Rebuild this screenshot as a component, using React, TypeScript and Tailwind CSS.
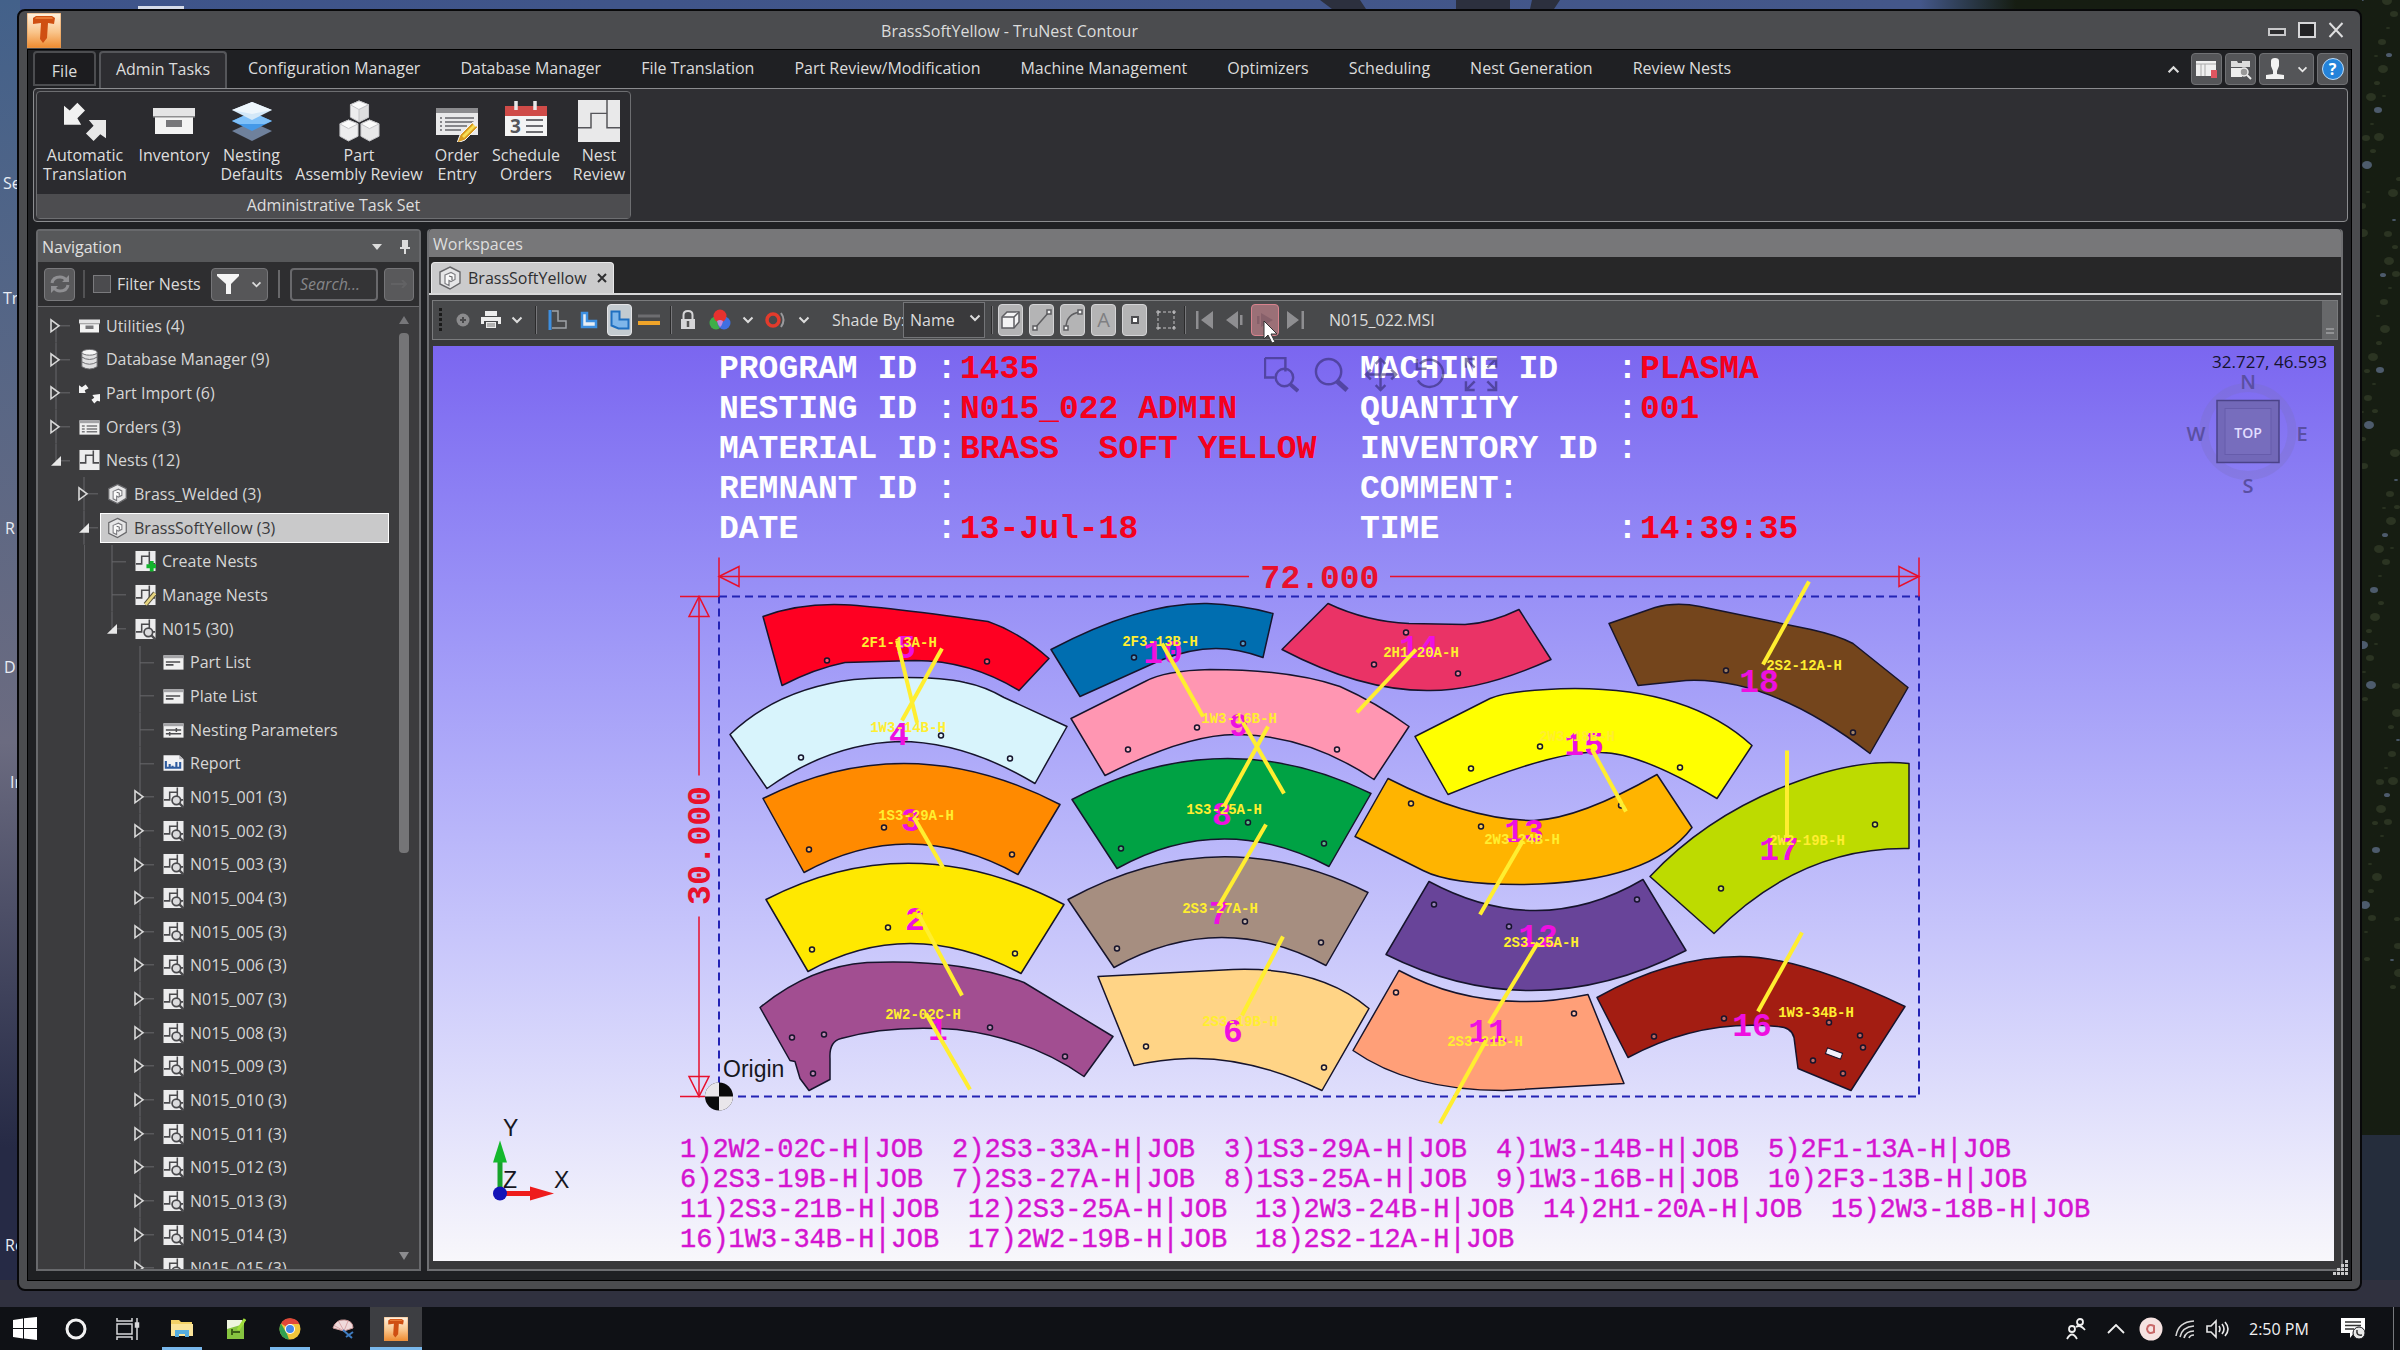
import React from "react";

const UI = "font-['Open_Sans','Noto_Sans',sans-serif]";

/* ---------- small shared glyphs ---------- */

const Chevron = ({ className = "w-3 h-2" }: { className?: string }) => (
  <svg viewBox="0 0 12 8" className={className} fill="none" stroke="currentColor" strokeWidth="2">
    <path d="M1.5 1.5 6 6l4.5-4.5" />
  </svg>
);

const LogoT = ({ className }: { className: string }) => (
  <svg viewBox="0 0 34 35" className={className} preserveAspectRatio="none">
    <defs>
      <linearGradient id="logoBg" x1="0" y1="0" x2="0" y2="1">
        <stop offset="0" stopColor="#fff3e2" />
        <stop offset="0.55" stopColor="#f9c48a" />
        <stop offset="1" stopColor="#ee8a2e" />
      </linearGradient>
    </defs>
    <rect width="34" height="35" fill="url(#logoBg)" stroke="#e59a55" />
    <path d="M6 5l3-2h16l3 2-1 6-6-1-1 15-4 5-3-4 1-16-8 1z" fill="#cf4f12" />
    <path d="M9 4h16l1 2H8z" fill="#e87a35" />
  </svg>
);

const BoxIcon = ({ className }: { className: string }) => (
  <svg viewBox="0 0 42 42" className={className}>
    <path d="M0 8h42v8H0z" fill="#e4e4e5" />
    <path d="M2 16h38v18H2z" fill="#f3f3f3" />
    <path d="M0 16h42v1.5H0z" fill="#8e8e90" />
    <path d="M13 20h16v7H13z" fill="#77777a" />
  </svg>
);

const NestIcon = ({ className, badge }: { className: string; badge?: "plus" | "edit" | "view" }) => (
  <svg viewBox="0 0 22 22" className={className}>
    <rect x="0.5" y="0.5" width="21" height="21" fill="#ececed" />
    <path d="M1 14h6V6h8v8h6M15 6V1" fill="none" stroke="#4a4a4d" strokeWidth="1.6" />
    {badge === "plus" && <path d="M17.500 11v11M12 16.500h11" stroke="#12b52c" strokeWidth="4" />}
    {badge === "edit" && (
      <>
        <path d="M11 21l10-12" stroke="#55503a" strokeWidth="5" />
        <path d="M11 21l10-12" stroke="#e6d480" strokeWidth="3" />
      </>
    )}
    {badge === "view" && (
      <>
        <circle cx="14" cy="14.500" r="4.500" fill="#dcdcde" stroke="#4a4a4d" strokeWidth="1.800" />
        <path d="M17.500 18l4 4" stroke="#4a4a4d" strokeWidth="2.500" />
      </>
    )}
  </svg>
);

const MaterialIcon = ({ className }: { className: string }) => (
  <svg viewBox="0 0 24 24" className={className}>
    <path d="M12 1l10 5v11l-10 6-10-5V6z" fill="#e6e6e7" stroke="#68686b" strokeWidth="1.400" />
    <path d="M7 9l6-2.500 4 2v5l-4 2-2-1v5l-4-2z" fill="#fafafa" stroke="#7c7c80" strokeWidth="1.200" />
    <path d="M11 10l3 1v3" fill="none" stroke="#68686b" strokeWidth="1.200" />
  </svg>
);

const TableIcon = ({ className, kind }: { className: string; kind: "orders" | "list" | "params" }) => (
  <svg viewBox="0 0 22 20" className={className}>
    <rect x="0.500" y="3" width="21" height="15" fill="#f0f0f0" />
    <rect x="0.500" y="3" width="21" height="3" fill="#a3a3a6" />
    {kind === "orders" && <path d="M3 9h3M8 9h11M3 12h3M8 12h11M3 15h3M8 15h11" stroke="#77777a" strokeWidth="1.500" />}
    {kind === "list" && <path d="M3 10h15M3 13h8" stroke="#4d4d50" strokeWidth="1.800" />}
    {kind === "params" && <path d="M3 10h16M3 14h16M14 8v4M7 12v4" stroke="#4d4d50" strokeWidth="1.600" />}
  </svg>
);

const DatabaseIcon = ({ className }: { className: string }) => (
  <svg viewBox="0 0 22 22" className={className} fill="#e0e0e1" stroke="#6c6c6f" strokeWidth="1">
    <path d="M3 14v5q8 5 16 0v-5z" />
    <path d="M3 9v5q8 5 16 0V9z" />
    <path d="M3 4v5q8 5 16 0V4z" />
    <ellipse cx="11" cy="4" rx="8" ry="3" fill="#f6f6f6" />
  </svg>
);

const ImportIcon = ({ className }: { className: string }) => (
  <svg viewBox="0 0 22 20" className={className} fill="#f4f4f4">
    <path d="M0 2l3 2 4-3 3 4-4 2 1 3H0z" />
    <path d="M22 11v8l-3-1-3 3-3-4 3-2-2-3z" />
  </svg>
);

const ReportIcon = ({ className }: { className: string }) => (
  <svg viewBox="0 0 22 20" className={className}>
    <path d="M0.500 2H17l4.500 4v12H.5z" fill="#f2f2f4" />
    <path d="M17 2v4h4.500" fill="#b5b5b9" />
    <path d="M3 8v7h15V9M7 15v-4M10 15v-2M14 15V9" fill="none" stroke="#2e5b9e" strokeWidth="2.200" />
  </svg>
);

/* ---------- ribbon ---------- */

const RIBBON_TABS = [
  "Configuration Manager",
  "Database Manager",
  "File Translation",
  "Part Review/Modification",
  "Machine Management",
  "Optimizers",
  "Scheduling",
  "Nest Generation",
  "Review Nests",
];

const big = "w-[42px] h-[42px]";

const TASKS: { lines: string[]; width: string; icon: React.ReactNode }[] = [
  {
    lines: ["Automatic", "Translation"],
    width: "w-[96px]",
    icon: (
      <svg viewBox="0 0 44 42" className={big} fill="#f1f1f1">
        <path d="M0 5l6 5 8-8 8 8-8 8 4 7H0z" />
        <path d="M44 20v19l-6-4-7 7-8-8 8-8-5-6z" fill="#e8e8e8" />
      </svg>
    ),
  },
  { lines: ["Inventory"], width: "w-[82px]", icon: <BoxIcon className={big} /> },
  {
    lines: ["Nesting", "Defaults"],
    width: "w-[73px]",
    icon: (
      <svg viewBox="0 0 42 42" className={big}>
        <path d="M21 22l20 9-20 10L1 31z" fill="#6f819c" />
        <path d="M21 12l20 9-20 10L1 21z" fill="#4599e8" />
        <path d="M21 12l20 9-7 3H8l-7-3z" fill="#7fc0f8" />
        <path d="M21 2l20 8-20 10L1 10z" fill="#d3e8f8" />
        <path d="M21 2l20 8-20 4L1 10z" fill="#edf6fc" />
      </svg>
    ),
  },
  {
    lines: ["Part", "Assembly Review"],
    width: "w-[142px]",
    icon: (
      <svg viewBox="0 0 44 42" className={big} stroke="#c2c2c5" strokeWidth="1" strokeLinejoin="round">
        <path d="M22 0l10 4v13l-10 5-9-5V4z" fill="#ededee" />
        <path d="M22 0l10 4-10 5-9-5z" fill="#fbfbfb" />
        <path d="M22 9l10-5v13l-10 5z" fill="#dededf" />
        <path d="M11 20l10 4v13l-10 5-9-5V24z" fill="#ededee" />
        <path d="M11 20l10 4-10 5-9-5z" fill="#fbfbfb" />
        <path d="M33 20l10 4v13l-10 5-9-5V24z" fill="#e8e8e9" />
        <path d="M33 20l10 4-10 5-9-5z" fill="#fbfbfb" />
      </svg>
    ),
  },
  {
    lines: ["Order", "Entry"],
    width: "w-[54px]",
    icon: (
      <svg viewBox="0 0 42 42" className={big}>
        <rect x="0" y="8" width="42" height="27" fill="#e9e9ea" />
        <rect x="0" y="8" width="42" height="5" fill="#8b8b8e" />
        <path d="M4 18h2M9 18h29M4 22h2M9 22h29M4 26h2M9 26h22M4 30h2M9 30h16" stroke="#66666b" strokeWidth="1.500" />
        <path d="M21 43l3-8 13-13 5 5-13 13z" fill="#d99a1e" stroke="#f5f5f5" />
        <path d="M26 36l12-12 2 2-12 12z" fill="#f8df55" />
        <path d="M36 23l3-3 4 4-3 3z" fill="#eee" />
      </svg>
    ),
  },
  {
    lines: ["Schedule", "Orders"],
    width: "w-[84px]",
    icon: (
      <svg viewBox="0 0 42 42" className={big}>
        <rect x="0" y="6" width="42" height="30" fill="#f4f4f4" />
        <rect x="0" y="6" width="42" height="10" fill="#cf4b48" />
        <path d="M11 1v9M30 1v9" stroke="#e9e9ea" strokeWidth="3.500" />
        <text x="5" y="33" fontSize="19" fontWeight="700" fill="#56565a" fontFamily="Open Sans">3</text>
        <path d="M21 20h17M21 26h17M21 32h17" stroke="#6d6d72" strokeWidth="2" />
      </svg>
    ),
  },
  {
    lines: ["Nest", "Review"],
    width: "w-[62px]",
    icon: (
      <svg viewBox="0 0 42 44" className={big} preserveAspectRatio="none">
        <rect width="42" height="44" fill="#e9e9ea" />
        <path d="M0 29h13V14h16v15h13M29 14V0" fill="none" stroke="#55555a" strokeWidth="1.500" />
      </svg>
    ),
  },
];

const QUICK =
  "flex h-8 items-center justify-center gap-3 rounded border border-[#707174] bg-[#545558] text-[#e8e8e8]";

function Ribbon() {
  return (
    <div className="pl-[5px] pr-[3px]">
      <div className="flex h-[38px] items-stretch text-base text-[#dcdcdc]">
        <button className="mb-0.5 mt-px w-[63px] rounded-t border-2 border-[#4c4d50] bg-[#1c1c1f] pt-1">File</button>
        <button className="ml-[3px] mt-px w-[128px] rounded-t border-2 border-b-0 border-[#55565a] bg-[#2d2d31] pb-1">
          Admin Tasks
        </button>
        <div className="ml-px flex pb-0.5">
          {RIBBON_TABS.map((t) => (
            <button key={t} className="whitespace-nowrap px-5">
              {t}
            </button>
          ))}
        </div>
        <div className="ml-auto flex items-center gap-[3px]">
          <button aria-label="Collapse ribbon" className="mr-1 px-1">
            <Chevron className="h-[9px] w-[13px] rotate-180" />
          </button>
          <button aria-label="Layout" className={`${QUICK} w-[31px]`}>
            <svg viewBox="0 0 22 20" className="h-5 w-[22px]">
              <rect x="0" y="2" width="20" height="15" fill="#f0f0f0" />
              <path d="M0 5h20M5 5v12M9 5v12" stroke="#aaa" />
              <rect x="15" y="11" width="6" height="8" fill="#e05560" />
            </svg>
          </button>
          <button aria-label="Find files" className={`${QUICK} w-[31px]`}>
            <svg viewBox="0 0 22 22" className="h-[22px] w-[22px]">
              <path d="M1 3h6l1 2h4v4H1zM12 3h8v6h-8z" fill="#ddd" />
              <path d="M1 10h11v9H1z" fill="#eee" />
              <circle cx="14" cy="14" r="4" fill="#999" stroke="#eee" strokeWidth="1.500" />
              <path d="M17 17l4 4" stroke="#eee" strokeWidth="2" />
            </svg>
          </button>
          <button aria-label="User" className={`${QUICK} w-[55px]`}>
            <svg viewBox="0 0 20 22" className="h-[22px] w-5" fill="#f2f2f2">
              <path d="M6 3q0-3 4-3t4 3v5l-2 5v3l7 1v4H1v-4l7-1v-3L6 8z" />
            </svg>
            <Chevron className="h-[7px] w-[11px]" />
          </button>
          <button aria-label="Help" className={`${QUICK} w-[31px]`}>
            <span className="flex h-[22px] w-[22px] items-center justify-center rounded-full border border-[#bcdcf8] bg-[#2483da] text-base font-bold text-white">
              ?
            </span>
          </button>
        </div>
      </div>

      <div className="flex h-[134px] rounded border border-[#8b8c8f] bg-[#2f2f33] p-0.5">
        <section className="flex flex-col rounded-sm border border-[#6d6e71] bg-[#2b2b2f]">
          <div className="flex flex-1 pt-[8px]">
            {TASKS.map((t) => (
              <button key={t.lines[0]} className={`${t.width} flex flex-col items-center whitespace-nowrap`}>
                {t.icon}
                <span className="mt-1 text-base leading-[19px] text-[#dedede]">
                  {t.lines.map((l) => (
                    <span key={l} className="block">
                      {l}
                    </span>
                  ))}
                </span>
              </button>
            ))}
          </div>
          <h2 className="h-6 bg-[#4d4d50] text-center text-base leading-[23px] text-[#dedede]">Administrative Task Set</h2>
        </section>
      </div>
    </div>
  );
}

/* ---------- navigation tree ---------- */

type TreeRow = {
  label: string;
  level: number;
  icon: React.ReactNode;
  state?: "open" | "closed";
  selected?: boolean;
  lines: boolean[];
  last?: boolean;
  first?: boolean;
};

const sm = "h-[22px] w-[21px] shrink-0";

const ROWS: TreeRow[] = [
  { label: "Utilities (4)", level: 0, state: "closed", icon: <BoxIcon className={sm} />, lines: [], first: true },
  { label: "Database Manager (9)", level: 0, state: "closed", icon: <DatabaseIcon className={sm} />, lines: [] },
  { label: "Part Import (6)", level: 0, state: "closed", icon: <ImportIcon className={sm} />, lines: [] },
  { label: "Orders (3)", level: 0, state: "closed", icon: <TableIcon className={sm} kind="orders" />, lines: [] },
  { label: "Nests (12)", level: 0, state: "open", icon: <NestIcon className={sm} />, lines: [], last: true },
  { label: "Brass_Welded (3)", level: 1, state: "closed", icon: <MaterialIcon className={sm} />, lines: [false] },
  { label: "BrassSoftYellow (3)", level: 1, state: "open", selected: true, icon: <MaterialIcon className={sm} />, lines: [false] },
  { label: "Create Nests", level: 2, icon: <NestIcon className={sm} badge="plus" />, lines: [false, true] },
  { label: "Manage Nests", level: 2, icon: <NestIcon className={sm} badge="edit" />, lines: [false, true] },
  { label: "N015 (30)", level: 2, state: "open", icon: <NestIcon className={sm} badge="view" />, lines: [false, true], last: true },
  { label: "Part List", level: 3, icon: <TableIcon className={sm} kind="list" />, lines: [false, true, false] },
  { label: "Plate List", level: 3, icon: <TableIcon className={sm} kind="list" />, lines: [false, true, false] },
  { label: "Nesting Parameters", level: 3, icon: <TableIcon className={sm} kind="params" />, lines: [false, true, false] },
  { label: "Report", level: 3, icon: <ReportIcon className={sm} />, lines: [false, true, false] },
  ...Array.from({ length: 15 }, (_, i): TreeRow => ({
    label: `N015_${String(i + 1).padStart(3, "0")} (3)`,
    level: 3,
    state: "closed",
    icon: <NestIcon className={sm} badge="view" />,
    lines: [false, true, false],
  })),
];

function TreeItem({ row }: { row: TreeRow }) {
  return (
    <li className="flex min-h-0 flex-1 items-stretch">
      {row.lines.map((on, i) => (
        <span key={i} className="flex w-7 shrink-0 justify-center">
          {on && <span className="w-px bg-[#5c5c5f]" />}
        </span>
      ))}
      <svg viewBox="0 0 28 34" preserveAspectRatio="none" className="h-full w-7 shrink-0" fill="none" stroke="#68686b">
        <path d={row.last ? "M14 0V17H28" : row.first ? "M14 34V17H28" : "M14 0V34M14 17H28"} />
        {row.state === "closed" && <path d="M9 11v12l8-6z" fill="#3c3c3e" stroke="#d8d8d8" strokeWidth="1.600" />}
        {row.state === "open" && <path d="M19 12v10H9z" fill="#e8e8e8" stroke="none" />}
      </svg>
      <button
        className={
          row.selected
            ? "my-0.5 ml-0.5 mr-[30px] flex flex-1 items-center gap-1.5 whitespace-nowrap border border-white bg-[#c9c9ca] px-[6px] text-[#3a3a3c]"
            : "ml-0.5 flex flex-1 items-center gap-1.5 whitespace-nowrap px-[7px] text-[#d6d6d6]"
        }
      >
        {row.icon}
        {row.label}
      </button>
    </li>
  );
}

function Navigation() {
  return (
    <aside className="flex w-[385px] shrink-0 flex-col rounded-t border-2 border-[#68696c] bg-[#3c3c3e]">
      <header className="flex h-[31px] shrink-0 items-center bg-[#57585a] pl-1 pr-[9px] text-base text-[#e0e0e0]">
        <h2 className="flex-1">Navigation</h2>
        <button aria-label="Panel options" className="mr-[18px]">
          <svg viewBox="0 0 10 6" className="h-1.5 w-2.5" fill="#dcdcdc"><path d="M0 0h10L5 6z" /></svg>
        </button>
        <button aria-label="Pin panel">
          <svg viewBox="0 0 10 14" className="h-3.5 w-2.5" fill="#dcdcdc"><path d="M2 0h6v7h2v2H6v5H4V9H0V7h2z" /></svg>
        </button>
      </header>
      <div className="flex h-[45px] shrink-0 items-center border-b border-[#6a6a6d] bg-[#2e2e30] pl-1.5 pr-1 text-base text-[#dadada]">
        <button aria-label="Refresh" className="flex h-[33px] w-[31px] items-center justify-center rounded border border-[#7a7a7d] bg-[#59595b]">
          <svg viewBox="0 0 22 20" className="h-5 w-[22px]" fill="none" stroke="#8f8f92" strokeWidth="3">
            <path d="M3 9q1-6 8-6 4 0 6 3M19 11q-1 6-8 6-4 0-6-3" />
            <path d="M20 1v7h-7zM2 19v-7h7z" fill="#8f8f92" stroke="none" />
          </svg>
        </button>
        <span className="mx-2 h-7 w-0.5 bg-[#525254]" />
        <label className="flex items-center gap-1.5 whitespace-nowrap">
          <input type="checkbox" className="h-[18px] w-[18px] appearance-none border border-[#7a7a7d] bg-[#4b4b4e]" />
          Filter Nests
        </label>
        <button aria-label="Filter" className="ml-auto flex h-[33px] w-[57px] items-center justify-center gap-3 rounded border border-[#757578] bg-[#565658]">
          <svg viewBox="0 0 22 20" className="h-5 w-[22px]" fill="#f4f4f4"><path d="M0 0h22v2l-8 8v10h-5V10L0 2z" /></svg>
          <Chevron className="h-[7px] w-[11px]" />
        </button>
        <span className="ml-2.5 mr-2.5 h-7 w-0.5 bg-[#68686a]" />
        <input
          type="text"
          aria-label="Search"
          placeholder="Search..."
          className="h-[33px] w-[88px] rounded border-2 border-[#69696c] bg-[#343436] px-2 italic placeholder:text-[#858588]"
        />
        <button aria-label="Run search" className="ml-1.5 mr-px flex h-[33px] w-[30px] items-center justify-center rounded border border-[#757578] bg-[#59595b]">
          <svg viewBox="0 0 16 8" className="h-2 w-4" stroke="#626264" strokeWidth="2" fill="none"><path d="M0 4h15M11 0l4 4-4 4" /></svg>
        </button>
      </div>
      <div className="flex min-h-0 flex-1">
        <div className="min-h-0 flex-1 overflow-hidden">
          <ul className="flex h-[calc(100%+16px)] flex-col pl-1 pt-0.5 text-base leading-none">
            {ROWS.map((r) => (
              <TreeItem key={r.label} row={r} />
            ))}
          </ul>
        </div>
        <div className="-ml-5 mr-2.5 flex w-[10px] flex-col items-center py-2">
          <svg viewBox="0 0 10 10" className="h-2.5 w-2.5" fill="#77777a"><path d="M5 1l5 8H0z" /></svg>
          <div className="mt-2 h-[55%] w-full rounded bg-[#757577]" />
          <svg viewBox="0 0 10 10" className="mt-auto h-2.5 w-2.5" fill="#8c8c8f"><path d="M5 9l5-8H0z" /></svg>
        </div>
      </div>
    </aside>
  );
}

/* ---------- nest drawing ---------- */

type Part = {
  n: number;
  name: string;
  fill: string;
  d: string;
  holes: [number, number][];
  tag: [number, number];
  num: [number, number];
  line: [number, number, number, number];
};

const PARTS: Part[] = [
  { n: 1, name: "2W2-02C-H", fill: "#a24e91", d: "M760 1007Q810 966 867 962Q960 958 1024 982L1113 1036L1084 1076Q1030 1038 957 1029Q890 1024 841 1038Q829 1041 830 1058V1079L809 1090L800 1078L795 1061L790 1060Z", holes: [[792, 1037], [824, 1034], [813, 1073], [990, 1027], [1065, 1056]], tag: [923, 1013], num: [938, 1028], line: [926, 1013, 970, 1089] },
  { n: 2, name: "2S3-33A-H", fill: "#ffe800", d: "M766 899Q911 824 1064 904L1021 973Q910 914 808 971Z", holes: [[888, 927], [812, 949], [1015, 953]], tag: [919, 913], num: [915, 918], line: [918, 913, 962, 995] },
  { n: 3, name: "1S3-29A-H", fill: "#ff8a00", d: "M763 798Q908 725 1060 804L1018 874Q910 814 804 872Z", holes: [[884, 827], [809, 849], [1012, 854]], tag: [916, 814], num: [911, 819], line: [914, 817, 943, 867] },
  { n: 4, name: "1W3-14B-H", fill: "#d8f4fc", d: "M730 734Q778 688 854 679Q930 674 965 682Q985 686 1004 697L1067 726L1035 783Q965 741 899 741Q830 743 767 788Z", holes: [[801, 757], [941, 735], [1010, 758]], tag: [908, 726], num: [899, 733], line: [942, 648, 902, 720] },
  { n: 5, name: "2F1-13A-H", fill: "#fe0022", d: "M763 616Q795 604 834 604Q870 604 988 621Q1020 632 1049 658L1019 690Q970 660 915 660L845 662Q815 668 782 685Z", holes: [[827, 660], [987, 661]], tag: [899, 641], num: [906, 646], line: [897, 640, 917, 722] },
  { n: 6, name: "2S3-19B-H", fill: "#ffd486", d: "M1098 976L1233 969Q1320 966 1369 1008L1322 1090Q1250 1056 1189 1058Q1160 1059 1134 1065Z", holes: [[1146, 1046], [1324, 1067]], tag: [1240, 1020], num: [1233, 1030], line: [1283, 936, 1242, 1015] },
  { n: 7, name: "2S3-27A-H", fill: "#a68e80", d: "M1068 899Q1218 817 1368 892L1326 965Q1220 908 1114 967Z", holes: [[1245, 921], [1117, 948], [1321, 942]], tag: [1220, 907], num: [1219, 912], line: [1266, 824, 1219, 905] },
  { n: 8, name: "1S3-25A-H", fill: "#00a244", d: "M1072 799Q1222 720 1371 793L1329 866Q1222 810 1117 868Z", holes: [[1248, 822], [1121, 848], [1324, 843]], tag: [1224, 808], num: [1222, 813], line: [1268, 726, 1224, 806] },
  { n: 9, name: "1W3-16B-H", fill: "#ff96b2", d: "M1071 718L1145 681Q1165 670 1210 669Q1290 669 1340 686Q1376 702 1409 726L1374 779Q1310 736 1240 734Q1190 732 1105 775Z", holes: [[1197, 727], [1128, 749], [1337, 749]], tag: [1239, 717], num: [1239, 724], line: [1243, 722, 1284, 793] },
  { n: 10, name: "2F3-13B-H", fill: "#006eb0", d: "M1051 649Q1140 602 1207 603Q1240 604 1273 613L1263 657Q1238 648 1216 648Q1190 648 1160 660L1080 696Z", holes: [[1134, 657], [1243, 643]], tag: [1160, 640], num: [1163, 651], line: [1162, 643, 1203, 716] },
  { n: 11, name: "2S3-21B-H", fill: "#ff9f78", d: "M1399 970Q1455 1000 1520 1001Q1550 1002 1588 994L1624 1083L1503 1090Q1410 1090 1353 1050Z", holes: [[1396, 992], [1574, 1013]], tag: [1485, 1040], num: [1488, 1030], line: [1486, 1040, 1440, 1123] },
  { n: 12, name: "2S3-25A-H", fill: "#684499", d: "M1429 881Q1539 940 1643 879L1686 950Q1534 1028 1386 954Z", holes: [[1434, 904], [1637, 899], [1509, 926]], tag: [1541, 941], num: [1538, 935], line: [1538, 942, 1489, 1023] },
  { n: 13, name: "2W3-24B-H", fill: "#ffb400", d: "M1388 778Q1470 820 1534 820Q1580 818 1657 774L1692 827Q1650 883 1520 884Q1450 884 1423 870L1355 836Z", holes: [[1411, 803], [1481, 826], [1621, 805]], tag: [1522, 838], num: [1524, 830], line: [1523, 840, 1480, 914] },
  { n: 14, name: "2H1-20A-H", fill: "#ea3366", d: "M1328 603Q1366 621 1409 623L1465 624Q1490 623 1519 609L1551 659Q1480 691 1427 690Q1360 690 1282 649Z", holes: [[1406, 632], [1374, 664], [1458, 673]], tag: [1421, 651], num: [1419, 646], line: [1416, 649, 1357, 712] },
  { n: 15, name: "2W3-18B-H", fill: "#ffff00", d: "M1415 736L1490 698Q1510 689 1575 688Q1690 688 1752 745L1717 798Q1640 752 1601 752Q1560 748 1448 794Z", holes: [[1540, 746], [1471, 768], [1680, 767]], tag: [1577, 735], num: [1584, 743], line: [1592, 749, 1626, 811] },
  { n: 16, name: "1W3-34B-H", fill: "#a31d12", d: "M1597 997Q1670 956 1740 956Q1800 956 1905 1006L1851 1090L1798 1068L1794 1037Q1792 1027 1778 1026Q1700 1018 1628 1057Z", holes: [[1654, 1036], [1724, 1018], [1829, 1022], [1860, 1035], [1863, 1047], [1813, 1060], [1843, 1073]], tag: [1816, 1011], num: [1752, 1024], line: [1802, 932, 1758, 1011] },
  { n: 17, name: "2W2-19B-H", fill: "#bddb00", d: "M1650 876Q1710 812 1800 780Q1860 758 1909 763V848Q1800 846 1714 933Z", holes: [[1875, 824], [1721, 888]], tag: [1807, 839], num: [1779, 848], line: [1787, 750, 1787, 837] },
  { n: 18, name: "2S2-12A-H", fill: "#74451c", d: "M1609 623L1655 607Q1676 601 1700 606L1811 629Q1838 635 1853 643L1908 687L1870 753Q1770 676 1686 680L1638 685Z", holes: [[1726, 670], [1853, 732]], tag: [1804, 664], num: [1759, 680], line: [1809, 581, 1763, 664] },
];

const HEADER: [number, number, string, number, string][] = [
  [719, 377, "PROGRAM ID :", 960, "1435"],
  [719, 417, "NESTING ID :", 960, "N015_022 ADMIN"],
  [719, 457, "MATERIAL ID:", 960, "BRASS  SOFT YELLOW"],
  [719, 497, "REMNANT ID :", 960, ""],
  [719, 537, "DATE       :", 960, "13-Jul-18"],
  [1360, 377, "MACHINE ID   :", 1640, "PLASMA"],
  [1360, 417, "QUANTITY     :", 1640, "001"],
  [1360, 457, "INVENTORY ID :", 1640, ""],
  [1360, 497, "COMMENT:", 1640, ""],
  [1360, 537, "TIME         :", 1640, "14:39:35"],
];

const LEGEND_X = [
  [680, 952, 1224, 1496, 1768],
  [680, 952, 1224, 1496, 1768],
  [680, 968, 1255, 1543, 1831],
  [680, 968, 1255],
];

const MONO = "Liberation Mono, DejaVu Sans Mono, monospace";

function NestDrawing() {
  return (
    <svg viewBox="433 346 1901 914" className="block h-full w-full" fontFamily={MONO} role="img" aria-label="Nest N015_022">
      <g fontSize="33" fontWeight="700">
        {HEADER.map(([x, y, label, vx, value]) => (
          <g key={label}>
            <text className="whitespace-pre" x={x} y={y} fill="#ffffff">{label}</text>
            {value && <text className="whitespace-pre" x={vx} y={y} fill="#f5001d">{value}</text>}
          </g>
        ))}
      </g>

      <rect x="719" y="596" width="1200" height="500" fill="none" stroke="#2323b4" strokeWidth="2" strokeDasharray="8 5" />

      <g stroke="#e8102c" strokeWidth="1.500" fill="none">
        <path d="M719 557V596M1919 557V596M719 576H1249M1390 576H1919" />
        <path d="M719 576l20-10v20zM1919 576l-20-10v20z" />
        <path d="M680 596H719M680 1096H719M699 596V775M699 916V1096" />
        <path d="M699 596l-10 20h20zM699 1096l-10-20h20z" />
      </g>
      <g fontSize="33" fontWeight="700" fill="#e8102c" textAnchor="middle">
        <text x="1320" y="587">72.000</text>
        <text transform="translate(710 845) rotate(-90)">30.000</text>
      </g>

      {PARTS.map((p) => (
        <g key={p.n}>
          <path d={p.d} fill={p.fill} stroke="#16142c" strokeWidth="1.500" strokeLinejoin="round" />
          {p.holes.map(([x, y]) => (
            <circle key={`${x}-${y}`} cx={x} cy={y} r="2.500" fill="#ffffff55" stroke="#16142c" strokeWidth="1.500" />
          ))}
        </g>
      ))}
      <rect x="-8" y="-3" width="16" height="6" fill="#f4f0fa" stroke="#16142c" transform="translate(1834 1053) rotate(20)" />

      {PARTS.map((p) => (
        <g key={p.n} textAnchor="middle">
          <text x={p.num[0]} y={p.num[1] + 11} fontSize="33" fontWeight="700" fill="#ee10e0">{p.n}</text>
          <text x={p.tag[0]} y={p.tag[1] + 5} fontSize="14" fontWeight="700" fill={p.n === 2 ? p.fill : "#ffee30"}>{p.name}</text>
          <path d={`M${p.line[0]} ${p.line[1]}L${p.line[2]} ${p.line[3]}`} stroke="#ffee30" strokeWidth="4" />
        </g>
      ))}

      <circle cx="719" cy="1096" r="14" fill="#0b0b0b" />
      <path d="M719 1096V1082A14 14 0 0 0 705 1096ZM719 1096V1110A14 14 0 0 0 733 1096Z" fill="#e9e6ea" />
      <g fontFamily="Liberation Sans" fill="#17171f" fontSize="23">
        <text x="723" y="1076">Origin</text>
        <text x="503" y="1135">Y</text>
        <text x="554" y="1187">X</text>
        <text x="503" y="1187">Z</text>
      </g>
      <path d="M500 1193V1160" stroke="#17a32b" strokeWidth="5" />
      <path d="M500 1140l7 22h-14z" fill="#14b82d" />
      <path d="M500 1193H532" stroke="#ee1c1c" strokeWidth="5" />
      <path d="M554 1193l-24-7v14z" fill="#ee1c1c" />
      <circle cx="500" cy="1193" r="7" fill="#1313b8" />

      <g fontSize="27" fill="#d414d0" stroke="#d414d0" strokeWidth="0.400">
        {PARTS.map((p, i) => (
          <text key={p.n} x={LEGEND_X[Math.floor(i / 5)][i % 5]} y={1156 + Math.floor(i / 5) * 30}>
            {`${p.n})${p.name}|JOB`}
          </text>
        ))}
      </g>

      <circle cx="2248" cy="431" r="44" fill="none" stroke="#7a6fc0" strokeOpacity="0.300" strokeWidth="9" />
      <rect x="2217" y="400" width="62" height="62" fill="#7268b8" stroke="#4b4389" strokeWidth="1.500" />
      <rect x="2225" y="408" width="46" height="46" fill="#776dbd" stroke="#665cab" />
      <g fontFamily="Open Sans" fontWeight="600" fontSize="20" fill="#5a4fa2" textAnchor="middle">
        <text x="2248" y="388">N</text>
        <text x="2248" y="492">S</text>
        <text x="2196" y="440">W</text>
        <text x="2302" y="440">E</text>
        <text x="2248" y="437" fontSize="14" fill="#e2deff">TOP</text>
      </g>
      <text x="2327" y="367" fontFamily="Open Sans" fontSize="17" textAnchor="end" fill="#15132e">32.727, 46.593</text>
    </svg>
  );
}

const VIEW_TOOLS: [string, React.ReactNode][] = [
  ["Zoom window", <><path d="M1 1h21v14M1 1v20h10" /><circle cx="21" cy="21" r="9" /><path d="M27 28l8 7" strokeWidth="4" /></>],
  ["Zoom", <><circle cx="15" cy="15" r="13" /><path d="M24 25l10 9" strokeWidth="5" /></>],
  ["Pan", <path d="M17 2v32M2 18h31M12 7l5-5 5 5M12 29l5 5 5-5M7 13l-5 5 5 5M28 13l5 5-5 5" />],
  ["Rotate", <path d="M6 7a14 14 0 1 1-2 17M3 2v10h10" />],
  ["Fit", <path d="M2 11V2h9M24 2h9v9M2 25v9h9M33 25v9h-9M2 2l9 9M33 2l-9 9M2 34l9-9M33 34l-9-9" />],
];

/* ---------- workspace ---------- */

const Sep = ({ className }: { className: string }) => (
  <span className={`h-7 w-0.5 border-l border-[#2b2b2c] bg-[#77777a] ${className}`} />
);

const TOOL = "flex h-8 shrink-0 items-center justify-center";
const TOGGLE = "flex h-8 w-[25px] shrink-0 items-center justify-center rounded border border-[#d4d4d6] bg-[#b4b4b5]";

function Toolbar() {
  return (
    <div className="mx-[3px] mt-[5px] flex h-10 items-center border border-[#7a7b7d] bg-[#48494b] text-base text-[#dcdcdc]">
      <svg viewBox="0 0 4 24" className="ml-1.5 h-6 w-1" fill="#1a1a1a"><path d="M0 0h3v3H0zM0 5h3v3H0zM0 10h3v3H0zM0 15h3v3H0zM0 20h3v3H0z" /></svg>
      <button aria-label="Add" className={`${TOOL} ml-2.5 w-5`}>
        <svg viewBox="0 0 14 14" className="h-3.5 w-3.5"><circle cx="7" cy="7" r="6.500" fill="#8b8b8d" /><path d="M7 4v6M4 7h6" stroke="#4a4a4c" strokeWidth="2" /></svg>
      </button>
      <button aria-label="Print" className={`${TOOL} ml-1 w-7`}>
        <svg viewBox="0 0 20 18" className="h-[18px] w-5" fill="#ededed"><path d="M4 0h12v5H4zM0 6h20v7h-3v-3H3v3H0zM5 11h10v6H5z" /><path d="M6 13h8M6 15h8" stroke="#777" /></svg>
      </button>
      <button aria-label="Print options" className={`${TOOL} w-6`}><Chevron className="h-2 w-3" /></button>
      <Sep className="ml-1.5" />
      <button aria-label="Outline parts" className={`${TOOL} ml-1.5 w-[30px]`}>
        <svg viewBox="0 0 20 20" className="h-5 w-5" fill="none"><path d="M4 1h6v10h8v7H4" stroke="#9fa3a8" strokeWidth="1.500" /><path d="M2 0v20" stroke="#3d8fe0" strokeWidth="3" /></svg>
      </button>
      <button aria-label="Edges" className={`${TOOL} w-[31px]`}>
        <svg viewBox="0 0 18 18" className="h-[18px] w-[18px]" fill="#e8eef4" stroke="#3d8fe0" strokeWidth="2.500"><path d="M2 2h5v8h9v6H2z" /></svg>
      </button>
      <button aria-label="Shaded edges" className="ml-[3px] flex h-8 w-[25px] items-center justify-center rounded border border-[#e4e4e6] bg-[#c4cbd0]">
        <svg viewBox="0 0 20 20" className="h-5 w-5" fill="#7fb6ea" stroke="#1f6fc0" strokeWidth="2"><path d="M1.500 1.500h8v8h9v9h-10l-7-3z" /></svg>
      </button>
      <button aria-label="Sheets" className={`${TOOL} ml-0.5 w-[30px]`}>
        <svg viewBox="0 0 22 14" className="h-3.5 w-[22px]"><path d="M0 3h22" stroke="#6d6d70" strokeWidth="3" /><path d="M0 10h22" stroke="#f0a429" strokeWidth="4" /></svg>
      </button>
      <Sep className="ml-1.5" />
      <button aria-label="Lock" className={`${TOOL} ml-1 w-6`}>
        <svg viewBox="0 0 16 20" className="h-5 w-4"><path d="M3.500 9V5q0-4 4.500-4t4.500 4v4" fill="none" stroke="#d6d6d8" strokeWidth="2" /><rect x="1" y="9" width="14" height="10" fill="#d6d6d8" /><path d="M8 11v6" stroke="#555" strokeWidth="2.500" /></svg>
      </button>
      <button aria-label="Colours" className={`${TOOL} ml-2 w-6`}>
        <svg viewBox="0 0 22 22" className="h-[22px] w-[22px]"><circle cx="7" cy="14" r="6.500" fill="#3fae49" /><circle cx="15" cy="14" r="6.500" fill="#3f6fe0" /><circle cx="11" cy="7" r="6.500" fill="#e8322f" /><path d="M8 12q3-2 6 0-1 5-3 6-2-2-3-6" fill="#c08adf" /></svg>
      </button>
      <button aria-label="Colour options" className={`${TOOL} ml-1 w-6`}><Chevron className="h-2 w-3" /></button>
      <button aria-label="Record" className={`${TOOL} ml-1 w-6`}>
        <svg viewBox="0 0 22 18" className="h-[18px] w-[22px]" fill="none"><circle cx="8" cy="9" r="6" stroke="#e23b2c" strokeWidth="3.500" /><path d="M16 2q5 7 0 14" stroke="#9a9a9d" strokeWidth="2" /></svg>
      </button>
      <button aria-label="Record options" className={`${TOOL} ml-1 w-6`}><Chevron className="h-2 w-3" /></button>
      <label htmlFor="shade" className="ml-4 w-[71px] whitespace-nowrap">Shade By:</label>
      <span className="relative flex w-[82px]">
        <select id="shade" className="h-9 w-full appearance-none border border-[#747578] bg-[#3a3a3c] pl-1.5">
          <option>Name</option>
        </select>
        <span className="pointer-events-none absolute right-1 top-3"><Chevron className="h-2 w-3" /></span>
      </span>
      <Sep className="ml-1.5" />
      <div className="ml-[5px] flex gap-1.5">
        <button aria-label="Solids" className={TOGGLE}>
          <svg viewBox="0 0 20 20" className="h-5 w-5" fill="#f4f4f4" stroke="#5e5e61" strokeWidth="1.500"><path d="M1 7l5-5h12v10l-5 6H1z" /><path d="M1 7h12l5-5M13 7v11" /></svg>
        </button>
        <button aria-label="Lines" className={TOGGLE}>
          <svg viewBox="0 0 22 24" className="h-6 w-[22px]" fill="#f4f4f4" stroke="#5e5e61" strokeWidth="1.500"><path d="M4 20L18 4" /><path d="M2 18h4v4H2zM16 2h4v4h-4z" /></svg>
        </button>
        <button aria-label="Arcs" className={TOGGLE}>
          <svg viewBox="0 0 22 24" className="h-6 w-[22px]" fill="#f4f4f4" stroke="#5e5e61" strokeWidth="1.500"><path d="M4 20Q4 6 18 4" fill="none" /><path d="M2 18h4v4H2zM16 2h4v4h-4z" /></svg>
        </button>
        <button aria-label="Annotations" className={`${TOGGLE} text-xl text-[#7f7f82]`}>A</button>
        <button aria-label="Points" className={TOGGLE}>
          <svg viewBox="0 0 10 10" className="h-2.5 w-2.5" fill="#fff" stroke="#4e4e51" strokeWidth="2"><path d="M2 2h6v6H2z" /></svg>
        </button>
        <button aria-label="Bounds" className={`${TOOL} w-[25px]`}>
          <svg viewBox="0 0 20 20" className="h-5 w-5" fill="none" stroke="#c2c2c4"><path d="M2 2h16v16H2z" strokeDasharray="3 2" /><path d="M1 1h2v2H1zM17 1h2v2h-2zM1 17h2v2H1zM17 17h2v2h-2z" /></svg>
        </button>
      </div>
      <Sep className="ml-1.5" />
      <button aria-label="First nest" className={`${TOOL} ml-[5px] w-[28px]`}>
        <svg viewBox="0 0 18 18" className="h-[18px] w-[18px]" fill="#8e8e91"><path d="M0 0h2.500v18H0zM17 0v18L5 9z" /></svg>
      </button>
      <button aria-label="Previous nest" className={`${TOOL} w-[30px]`}>
        <svg viewBox="0 0 18 18" className="h-[18px] w-[18px]" fill="#8e8e91"><path d="M13 0v18L1 9zM15 4h2.500v10H15z" /></svg>
      </button>
      <button aria-label="Next nest" className="relative ml-0.5 flex h-8 w-[28px] items-center justify-center rounded border border-[#d8838e] bg-[#9b7077]">
        <svg viewBox="0 0 18 18" className="h-[18px] w-[18px]" fill="#87606a"><path d="M5 2v14l12-7zM1 5h2.500v8H1z" /></svg>
        <svg viewBox="0 0 16 24" className="absolute left-[11px] top-[15px] z-10 h-6 w-4"><path d="M1 1v18l4-4 4 8 3-1-4-8h6z" fill="#fff" stroke="#333" /></svg>
      </button>
      <button aria-label="Last nest" className={`${TOOL} ml-0.5 w-[28px]`}>
        <svg viewBox="0 0 18 18" className="h-[18px] w-[18px]" fill="#8e8e91"><path d="M1 0v18l12-9zM15.500 0H18v18h-2.500z" /></svg>
      </button>
      <span className="ml-5">N015_022.MSI</span>
      <span className="ml-auto flex h-full w-[15px] flex-col items-center justify-end bg-[#67686a] pb-1">
        <svg viewBox="0 0 8 8" className="h-2 w-2" stroke="#a0a0a2" strokeWidth="1.500"><path d="M0 2h8M0 6h8" /></svg>
      </span>
    </div>
  );
}

function Workspaces() {
  return (
    <main className="flex min-w-0 flex-1 flex-col rounded-t border-2 border-t-0 border-[#6e6f72] bg-[#38383a]">
      <h2 className="h-7 shrink-0 rounded-t bg-[#777779] pl-1 pt-0.5 text-base leading-[26px] text-[#dedede]">Workspaces</h2>
      <div className="flex h-[38px] shrink-0 items-end border-b-2 border-[#d8d8d9] bg-[#272728] pl-0.5">
        <div className="flex h-[31px] items-center rounded-t-sm border border-[#e8e8e9] border-b-0 bg-[#cbcbcc] pl-1.5 text-base text-[#2e2e30]">
          <MaterialIcon className="h-6 w-6" />
          <span className="ml-1.5">BrassSoftYellow</span>
          <button aria-label="Close BrassSoftYellow" className="ml-1 px-1.5">
            <svg viewBox="0 0 10 10" className="h-2.5 w-2.5" stroke="#2e2e30" strokeWidth="2"><path d="M1 1l8 8M9 1l-8 8" /></svg>
          </button>
        </div>
      </div>
      <Toolbar />
      <div className="relative mb-2 ml-1 mr-[7px] mt-1.5 min-h-0 flex-1 bg-linear-to-b from-[#7b66f0] to-[#f8f7fb]">
        <NestDrawing />
        <div className="absolute left-[831px] top-[11px] flex gap-[15px] opacity-60">
          {VIEW_TOOLS.map(([name, shape]) => (
            <button key={name} aria-label={name}>
              <svg viewBox="0 0 36 37" className="h-9 w-[35px]" fill="none" stroke="#352c70" strokeWidth="2.500">
                {shape}
              </svg>
            </button>
          ))}
        </div>
      </div>
    </main>
  );
}

/* ---------- window and taskbar ---------- */

function AppWindow() {
  return (
    <div className="relative flex min-h-0 flex-1 flex-col rounded-lg border-2 border-[#08080a] bg-[#4b4c4f] px-2 pb-2">
      <header className="flex h-[38px] shrink-0 items-center text-base text-[#dcdcdc]">
        <LogoT className="h-[35px] w-[34px]" />
        <h1 className="flex-1 pr-[310px] pt-0.5 text-center">BrassSoftYellow - TruNest Contour</h1>
        <div className="flex items-center gap-3 pr-2">
          <button aria-label="Minimize" className="mt-1 h-2 w-[18px] border-2 border-[#c8c8ca] bg-[#2b2b2d]" />
          <button aria-label="Maximize" className="h-4 w-[18px] border-2 border-[#d6d6d8] bg-[#232325]" />
          <button aria-label="Close">
            <svg viewBox="0 0 16 16" className="h-4 w-4" stroke="#dededf" strokeWidth="2"><path d="M1.500 1l13 14M14.500 1l-13 14" /></svg>
          </button>
        </div>
      </header>
      <div className="relative flex min-h-0 flex-1 flex-col border border-black bg-[#1f2023]">
        <Ribbon />
        <div className="mb-[9px] ml-2 mr-2 mt-[7px] flex min-h-0 flex-1 gap-1.5">
          <Navigation />
          <Workspaces />
        </div>
        <svg viewBox="0 0 16 16" className="absolute bottom-1 right-0.5 h-4 w-4" fill="#c9c9ca">
          <path d="M12 0h3v3h-3zM12 4h3v3h-3zM8 4h3v3H8zM12 8h3v3h-3zM8 8h3v3H8zM4 8h3v3H4zM12 12h3v3h-3zM8 12h3v3H8zM4 12h3v3H4zM0 12h3v3H0z" />
        </svg>
      </div>
    </div>
  );
}

const TASKBAR: { name: string; width: string; running?: boolean; active?: boolean; icon: React.ReactNode }[] = [
  { name: "Start", width: "w-[50px]", icon: <svg viewBox="0 0 24 23" className="h-[23px] w-6" fill="#fff"><path d="M0 3l10-1.500V11H0zM11 1.300L24 0v11H11zM0 12h10v9.500L0 20zM11 12h13v11l-13-1.500z" /></svg> },
  { name: "Cortana", width: "w-[51px]", icon: <svg viewBox="0 0 22 22" className="h-[22px] w-[22px]" fill="none" stroke="#f2f2f2" strokeWidth="3"><circle cx="11" cy="11" r="9" /></svg> },
  { name: "Task View", width: "w-[54px]", icon: <svg viewBox="0 0 24 22" className="h-[22px] w-6" fill="none" stroke="#d8d8da" strokeWidth="1.500"><path d="M1 6h15v10H1zM1 0v3h15V0M1 22v-3h15v3M21 0v22" /><path d="M19.500 5h3v4h-3z" fill="#d8d8da" /></svg> },
  { name: "File Explorer", width: "w-[54px]", running: true, icon: <svg viewBox="0 0 22 19" className="h-[19px] w-[22px]"><path d="M0 1h8l2 2h11v14H0z" fill="#f3d267" /><path d="M0 5h22v12H0z" fill="#fbe59a" /><path d="M4 11h14v7h-4v-3H8v3H4z" fill="#56aee0" /></svg> },
  { name: "Editor", width: "w-[54px]", icon: <svg viewBox="0 0 20 22" className="h-[22px] w-5"><path d="M1 2h15l2 3v16H1z" fill="#eef5df" /><path d="M1 11l17-5v15H1z" fill="#86c440" /><path d="M6 14h8M6 11v6" stroke="#3b5f16" strokeWidth="2" /><path d="M12 12l7-11" stroke="#9fdd3a" strokeWidth="3" /></svg> },
  { name: "Chrome", width: "w-[54px]", running: true, icon: <svg viewBox="0 0 22 22" className="h-[22px] w-[22px]"><circle cx="11" cy="11" r="10.500" fill="#f0c53a" /><path d="M11 11L2 5.500a10.500 10.500 0 0 1 18.500.5H11z" fill="#e0463a" /><path d="M2 5.500L8 16l2 5.500A10.500 10.500 0 0 1 2 5.500z" fill="#32a050" /><circle cx="11" cy="11" r="5" fill="#fff" /><circle cx="11" cy="11" r="4" fill="#4387e8" /></svg> },
  { name: "Snipping Tool", width: "w-[53px]", icon: <svg viewBox="0 0 24 22" className="h-[22px] w-6"><path d="M1 10Q4 1 13 2q8 1 8 8l-9 3z" fill="#f0dadb" stroke="#c99" /><path d="M12 13L7 4M12 13l4-10M12 13L3 8" stroke="#d9a6a8" /><path d="M11 12l9 8M14 19l7-5" stroke="#3f7cc0" strokeWidth="2" /></svg> },
  { name: "TruNest", width: "w-[52px]", active: true, icon: <LogoT className="h-6 w-6" /> },
];

function Taskbar() {
  return (
    <footer className="flex h-[43px] shrink-0 items-stretch bg-[#0f1115] text-base text-[#f2f2f2]">
      {TASKBAR.map((t) => (
        <button
          key={t.name}
          aria-label={t.name}
          className={`${t.width} flex flex-col items-center justify-end ${t.active ? "bg-[#3d3e42]" : ""}`}
        >
          <span className="flex flex-1 items-center pt-[3px]">{t.icon}</span>
          <span className={t.active ? "h-[3px] w-full bg-[#79b8ec]" : t.running ? "h-[3px] w-10 bg-[#79b8ec]" : "h-[3px] w-10"} />
        </button>
      ))}
      <div className="ml-auto flex items-center">
        <button aria-label="People" className="w-[42px]">
          <svg viewBox="0 0 22 22" className="h-[22px] w-[22px]" fill="none" stroke="#f0f0f0" strokeWidth="1.800"><circle cx="15" cy="4" r="3" /><path d="M11 9q4-3 9 3" /><circle cx="7" cy="11" r="3" /><path d="M2 21q5-9 10 0" /></svg>
        </button>
        <button aria-label="Hidden icons" className="w-[32px]">
          <svg viewBox="0 0 18 10" className="h-2.5 w-[18px]" fill="none" stroke="#f0f0f0" strokeWidth="1.800"><path d="M1 9l8-8 8 8" /></svg>
        </button>
        <button aria-label="Antivirus" className="w-[36px]">
          <svg viewBox="0 0 24 24" className="h-6 w-6"><circle cx="12" cy="12" r="11.500" fill="#f6e2e1" /><path d="M15 15q-6 3-7-3 1-6 7-3v7" fill="none" stroke="#c9696a" strokeWidth="2" /></svg>
        </button>
        <button aria-label="Network" className="w-[31px]">
          <svg viewBox="0 0 20 20" className="h-5 w-5" fill="none" stroke="#d8d8d8" strokeWidth="1.600"><path d="M1 17Q3 3 19 2M5 18Q7 8 19 7M9 19q2-7 10-7M14 19q1-3 5-3" /></svg>
        </button>
        <button aria-label="Volume" className="mr-1 w-[39px]">
          <svg viewBox="0 0 24 20" className="h-5 w-6" fill="none" stroke="#e8e8e8" strokeWidth="1.600"><path d="M1 7h4l5-5v16l-5-5H1zM13 7q2 3 0 6M16 5q4 5 0 10M19 3q6 7 0 14" /></svg>
        </button>
        <time className="w-[92px] whitespace-nowrap">2:50 PM</time>
        <button aria-label="Notifications" className="mr-[27px]">
          <svg viewBox="0 0 25 24" className="h-6 w-[25px]"><path d="M0 1h24v15H13l-4 5v-5H0z" fill="#fff" /><path d="M4 5h16M4 8.500h16M4 12h9" stroke="#333" strokeWidth="1.500" /><circle cx="18" cy="16" r="6" fill="#e8e8e8" stroke="#17181c" /><path d="M16 13q-1 6 5 5" stroke="#333" fill="none" strokeWidth="1.500" /></svg>
        </button>
        <span className="mr-1.5 h-[43px] w-px bg-[#77797d]" />
      </div>
    </footer>
  );
}

const LEAVES = Array.from({ length: 90 }, (_, i) => ({
  x: (i * 17) % 38,
  y: (i * 137) % 1000,
  r: 1 + ((i * 7) % 4),
}));

function Wallpaper() {
  return (
    <>
      <div className="absolute inset-0 bg-linear-to-r from-[#3e548a] from-0% via-[#44578a] via-80% to-[#161d12] to-84%" />
      <div className="absolute inset-y-0 left-0 w-5 bg-linear-to-b from-[#43618a] from-0% via-[#6b6b80] via-55% to-[#262a45] to-85%" />
      <svg viewBox="0 0 420 9" className="absolute left-[55%] top-0 h-[9px] w-[420px]" fill="#2c303e">
        <path d="M0 0h40l6 9H12zM136 0h54v9h-54zM212 0h28l-6 9h-24z" />
      </svg>
      <div className="absolute left-[138px] top-1.5 h-[3px] w-[46px] bg-[#d5dbe8]" />
      <svg viewBox="0 0 38 1000" className="absolute right-0 top-0 h-[1000px] w-[38px]">
        {LEAVES.map((l, i) => (
          <ellipse key={i} cx={l.x} cy={l.y} rx={l.r + 1} ry={l.r} fill={i % 5 === 0 ? "#4d5b6c" : "#2b3422"} />
        ))}
      </svg>
      <div className="absolute bottom-0 right-0 h-[215px] w-10 bg-[#252d3c]" />
      <div className="absolute inset-x-0 bottom-0 h-[70px] bg-[#30313f]" />
      <div className="absolute inset-y-0 left-0 w-5 overflow-hidden text-base leading-none text-[#e8ecf4]">
        <span className="absolute left-[3px] top-[175px]">Se</span>
        <span className="absolute left-[3px] top-[290px]">Tr</span>
        <span className="absolute left-[5px] top-[520px]">R</span>
        <span className="absolute left-[4px] top-[659px]">D</span>
        <span className="absolute left-[10px] top-[774px]">In</span>
        <span className="absolute left-[5px] top-[1237px]">Re</span>
      </div>
    </>
  );
}

export default function App() {
  return (
    <div className={`relative flex h-screen flex-col overflow-hidden bg-[#30313f] ${UI}`}>
      <Wallpaper />
      <div className="relative flex min-h-0 flex-1 flex-col pb-4 pl-[17px] pr-[38px] pt-[9px]">
        <AppWindow />
      </div>
      <div className="relative">
        <Taskbar />
      </div>
    </div>
  );
}
